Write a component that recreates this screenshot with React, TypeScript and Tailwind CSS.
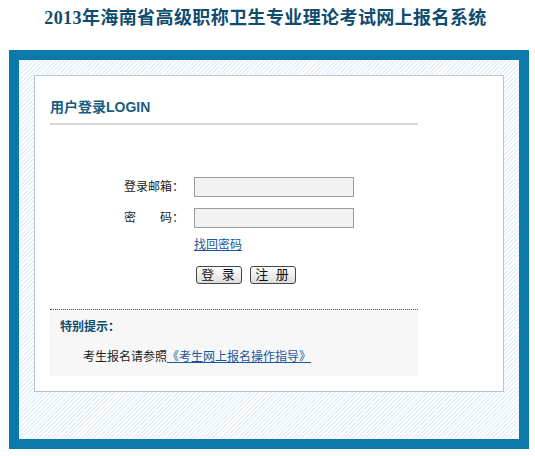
import React from 'react';

const cjk = '"Liberation Sans", "Noto Sans CJK SC", sans-serif';

export default function App() {
  return (
    <div className="w-[535px] h-[456px] bg-white" style={{ fontFamily: cjk }}>
      <div
        className="h-[37px] leading-[37px] text-center text-[18px] font-bold tracking-[0.4px] text-[#0f4c6e] pr-[4px]"
        style={{ fontFamily: '"Liberation Serif", "Noto Sans CJK SC", serif' }}
      >
        2013年海南省高级职称卫生专业理论考试网上报名系统
      </div>
      <div className="mt-[13px] ml-[9px] w-[520px] border-[10px] border-[#0b79a9] p-[15px] pb-[47px] bg-[repeating-linear-gradient(135deg,#ffffff_0px,#ffffff_1.6px,#e6f0f8_1.6px,#e6f0f8_3px)]">
        <div className="bg-white border border-[#b3c6d2] pl-[15px] pb-[15px]">
          <div className="w-[368px] pt-[21px] pb-[6px] leading-[20px] text-[14px] font-bold text-[#1a5c80] border-b-2 border-[#d9d9d9]">
            用户登录LOGIN
          </div>

          <div className="pl-[74px] mt-[52px] text-[12px] text-[#222]">
            <div className="flex items-center h-[20px]">
              <span className="w-[60px] text-right">登录邮箱：</span>
              <input className="ml-[10px] w-[160px] h-[20px] border border-[#9c9c9c] bg-[#f1f1f1] outline-none" />
            </div>
            <div className="flex items-center h-[20px] mt-[11px]">
              <span className="w-[60px] flex justify-between">
                <span>密</span>
                <span>码：</span>
              </span>
              <input type="password" className="ml-[10px] w-[160px] h-[20px] border border-[#9c9c9c] bg-[#f1f1f1] outline-none" />
            </div>
            <div className="ml-[70px] mt-[8px] leading-[18px]">
              <a className="text-[#1b56a0] underline cursor-pointer">找回密码</a>
            </div>
            <div className="ml-[72px] mt-[12px] flex gap-[8px]">
              <button className="w-[46px] h-[18px] leading-[16px] border border-[#444] rounded-[3px] bg-[linear-gradient(#ffffff,#dcdcdc)] text-[13px] text-[#111] tracking-[2px]">
                登 录
              </button>
              <button className="w-[46px] h-[18px] leading-[16px] border border-[#444] rounded-[3px] bg-[linear-gradient(#ffffff,#dcdcdc)] text-[13px] text-[#111] tracking-[2px]">
                注 册
              </button>
            </div>
          </div>

          <div className="mt-[25px] w-[368px] border-t border-dotted border-[#555] bg-[#f7f7f7] pt-[7px] pb-[9px] pl-[10px] text-[12px]">
            <div className="leading-[20px] font-bold text-[#0f4c6e]">特别提示：</div>
            <div className="mt-[10px] leading-[20px] pl-[23px] text-[#222]">
              考生报名请参照
              <a className="text-[#1b56a0] underline cursor-pointer">《考生网上报名操作指导》</a>
            </div>
          </div>
        </div>
      </div>
    </div>
  );
}
